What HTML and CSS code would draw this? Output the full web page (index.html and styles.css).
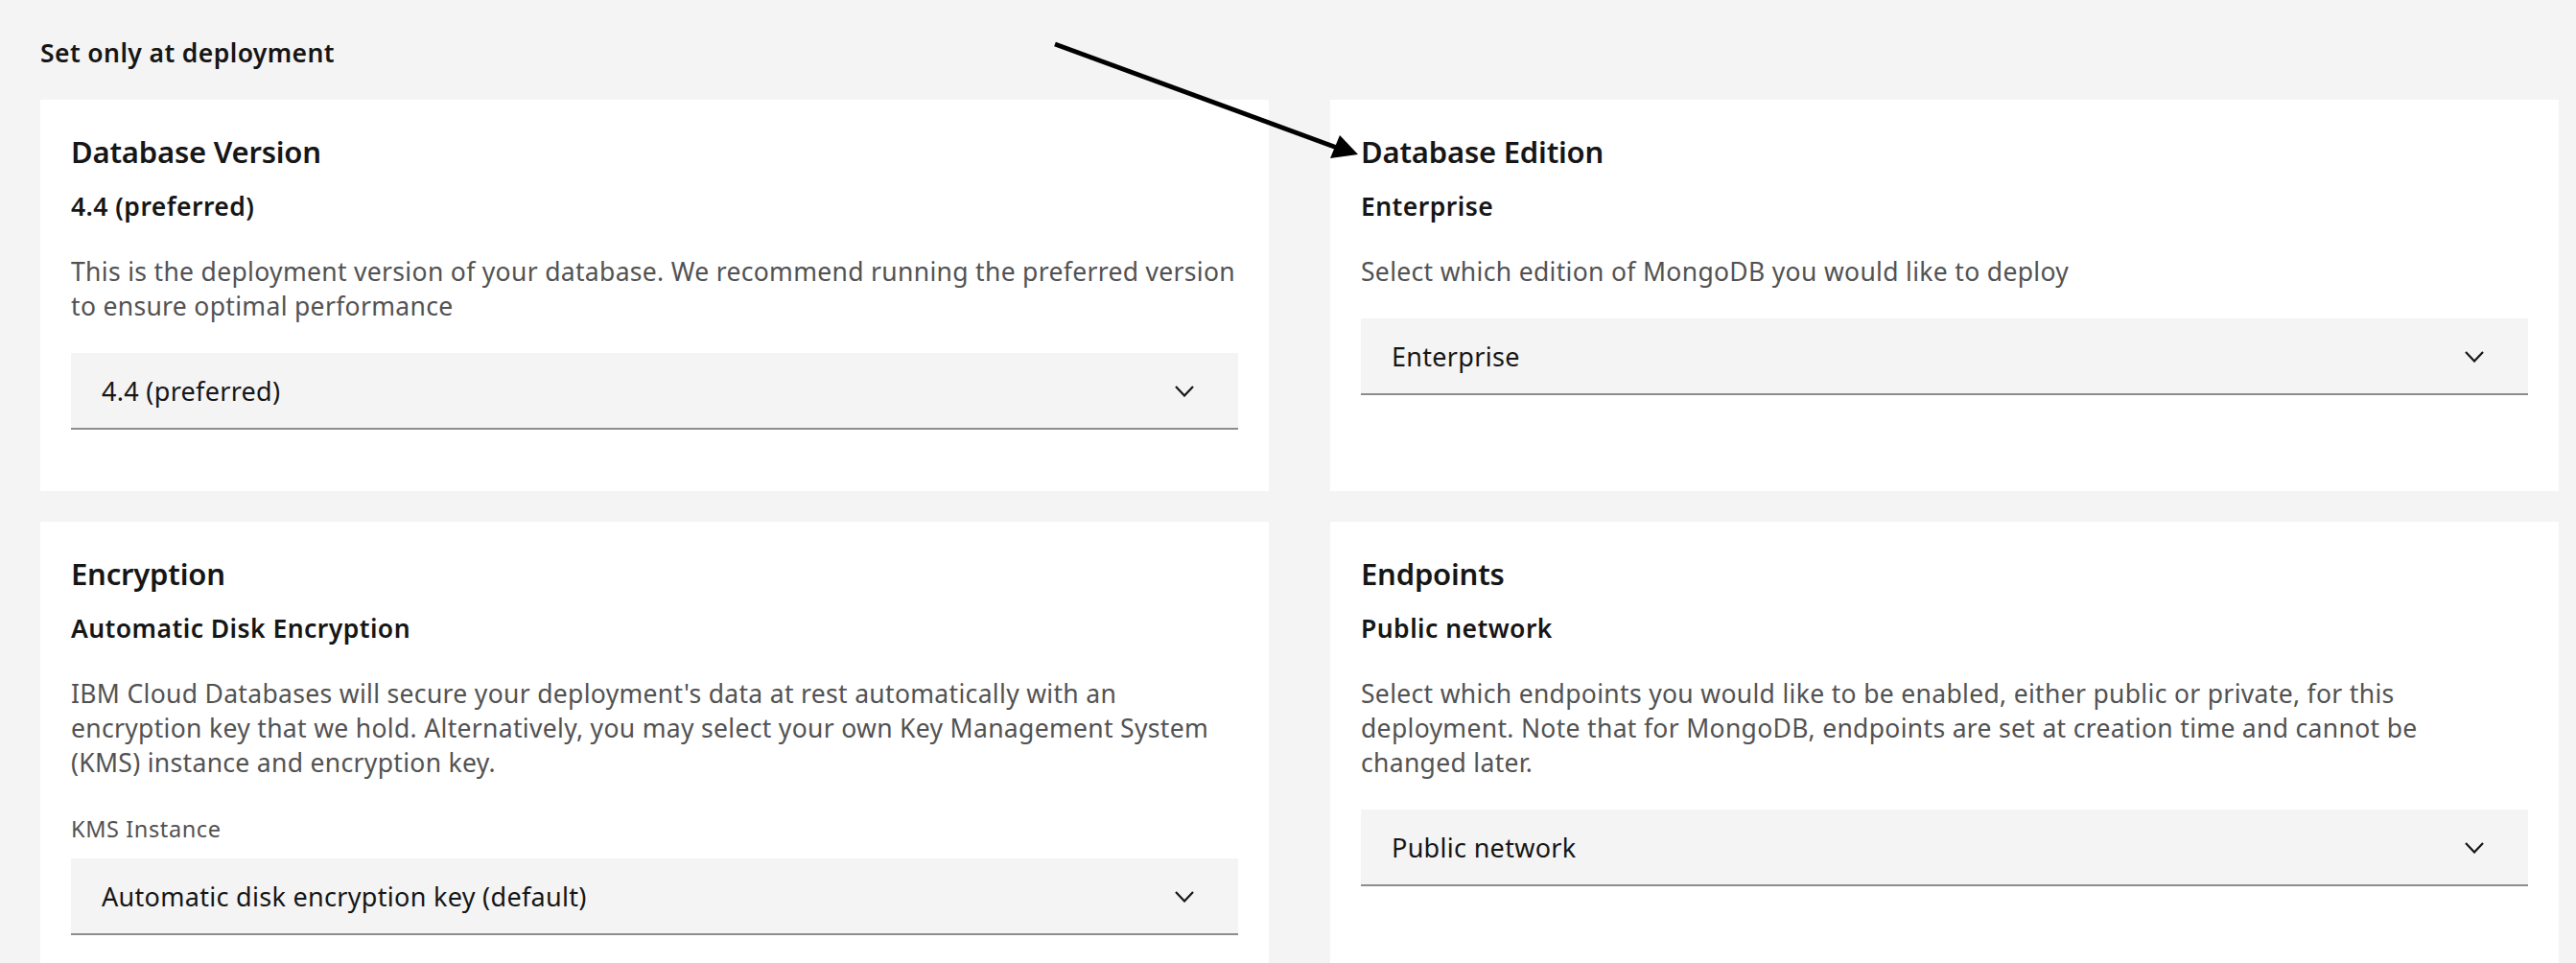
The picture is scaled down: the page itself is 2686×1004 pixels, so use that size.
FILE: index.html
```html
<!DOCTYPE html>
<html lang="en">
<head>
<meta charset="utf-8">
<title>Set only at deployment</title>
<link rel="stylesheet" href="styles.css">
</head>
<body>
<div class="page">
  <h2 class="section-title">Set only at deployment</h2>
  <div class="grid">
    <section class="card">
      <h3 class="card-title">Database Version</h3>
      <p class="card-value">4.4 (preferred)</p>
      <p class="card-desc">This is the deployment version of your database. We recommend running the preferred version<br>to ensure optimal performance</p>
      <div class="select">
        <span class="select-text">4.4 (preferred)</span>
        <svg class="chevron" viewBox="0 0 20 12" width="20" height="12"><polyline points="1,1 10,10.5 19,1" /></svg>
      </div>
    </section>
    <section class="card">
      <h3 class="card-title">Database Edition</h3>
      <p class="card-value">Enterprise</p>
      <p class="card-desc">Select which edition of MongoDB you would like to deploy</p>
      <div class="select">
        <span class="select-text">Enterprise</span>
        <svg class="chevron" viewBox="0 0 20 12" width="20" height="12"><polyline points="1,1 10,10.5 19,1" /></svg>
      </div>
    </section>
    <section class="card">
      <h3 class="card-title">Encryption</h3>
      <p class="card-value">Automatic Disk Encryption</p>
      <p class="card-desc">IBM Cloud Databases will secure your deployment's data at rest automatically with an<br>encryption key that we hold. Alternatively, you may select your own Key Management System<br>(KMS) instance and encryption key.</p>
      <label class="field-label">KMS Instance</label>
      <div class="select select-labeled">
        <span class="select-text">Automatic disk encryption key (default)</span>
        <svg class="chevron" viewBox="0 0 20 12" width="20" height="12"><polyline points="1,1 10,10.5 19,1" /></svg>
      </div>
    </section>
    <section class="card">
      <h3 class="card-title">Endpoints</h3>
      <p class="card-value">Public network</p>
      <p class="card-desc">Select which endpoints you would like to be enabled, either public or private, for this<br>deployment. Note that for MongoDB, endpoints are set at creation time and cannot be<br>changed later.</p>
      <div class="select">
        <span class="select-text">Public network</span>
        <svg class="chevron" viewBox="0 0 20 12" width="20" height="12"><polyline points="1,1 10,10.5 19,1" /></svg>
      </div>
    </section>
  </div>
  <svg class="annotation" viewBox="0 0 2686 1004" width="2686" height="1004">
    <line x1="1100" y1="46" x2="1394" y2="154" />
    <polygon points="1416,161 1387,165 1397,141" />
  </svg>
</div>
</body>
</html>
```
FILE: styles.css
```css
html, body {
  margin: 0;
  padding: 0;
  overflow: hidden;
  background: #f4f4f4;
}

body {
  font-family: "Noto Sans", "Open Sans", sans-serif;
  color: #161616;
}

.page {
  position: relative;
  padding: 37px 18px 0 42px;
}

.section-title {
  margin: 0 0 31px 0;
  font-size: 26.5px;
  line-height: 36px;
  font-weight: 600;
  letter-spacing: 0.4px;
  color: #161616;
}

.grid {
  display: grid;
  grid-template-columns: 1fr 1fr;
  column-gap: 64px;
  row-gap: 32px;
}

.card {
  background: #ffffff;
  padding: 34px 32px 64px 32px;
  display: flex;
  flex-direction: column;
  min-width: 0;
}

.card-title {
  margin: 0;
  font-size: 31px;
  line-height: 40px;
  font-weight: 600;
  letter-spacing: -0.2px;
  color: #161616;
}

.card-value {
  margin: 19px 0 0 0;
  font-size: 26.5px;
  line-height: 36px;
  font-weight: 600;
  letter-spacing: 0.45px;
  color: #161616;
}

.card-desc {
  margin: 32px 0 0 0;
  font-size: 26.5px;
  line-height: 36px;
  font-weight: 400;
  letter-spacing: 0.32px;
  white-space: nowrap;
  color: #525252;
}

.field-label {
  display: block;
  margin: 37px 0 0 0;
  font-size: 23.5px;
  line-height: 28px;
  letter-spacing: 0.6px;
  color: #525252;
}

.select {
  box-sizing: border-box;
  margin-top: 31px;
  height: 80px;
  border-bottom: 2px solid #8d8d8d;
  background: #f4f4f4;
  display: flex;
  align-items: center;
  justify-content: space-between;
  padding: 2px 46px 0 32px;
}

.select-labeled {
  margin-top: 17px;
}

.select-text {
  font-size: 27px;
  line-height: 36px;
  letter-spacing: 0.3px;
  color: #161616;
}

.chevron {
  display: block;
  fill: none;
  stroke: #161616;
  stroke-width: 2.2;
}

.annotation {
  position: absolute;
  top: 0;
  left: 0;
  pointer-events: none;
}

.annotation line {
  stroke: #000000;
  stroke-width: 5;
}

.annotation polygon {
  fill: #000000;
}
```
